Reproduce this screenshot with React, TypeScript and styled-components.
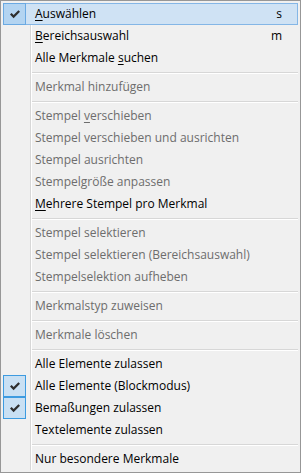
import React from "react";
import styled, { createGlobalStyle, css } from "styled-components";

type Entry =
  | { kind: "sep" }
  | {
      kind: "item";
      label: string;
      mnemonic?: number; // index of underlined letter
      shortcut?: string;
      disabled?: boolean;
      checked?: boolean;
      hot?: boolean;
    };

const entries: Entry[] = [
  { kind: "item", label: "Auswählen", mnemonic: 0, shortcut: "s", checked: true, hot: true },
  { kind: "item", label: "Bereichsauswahl", mnemonic: 0, shortcut: "m" },
  { kind: "item", label: "Alle Merkmale suchen", mnemonic: 14 },
  { kind: "sep" },
  { kind: "item", label: "Merkmal hinzufügen", disabled: true },
  { kind: "sep" },
  { kind: "item", label: "Stempel verschieben", mnemonic: 8, disabled: true },
  { kind: "item", label: "Stempel verschieben und ausrichten", disabled: true },
  { kind: "item", label: "Stempel ausrichten", disabled: true },
  { kind: "item", label: "Stempelgröße anpassen", disabled: true },
  { kind: "item", label: "Mehrere Stempel pro Merkmal", mnemonic: 0 },
  { kind: "sep" },
  { kind: "item", label: "Stempel selektieren", disabled: true },
  { kind: "item", label: "Stempel selektieren (Bereichsauswahl)", disabled: true },
  { kind: "item", label: "Stempelselektion aufheben", disabled: true },
  { kind: "sep" },
  { kind: "item", label: "Merkmalstyp zuweisen", disabled: true },
  { kind: "sep" },
  { kind: "item", label: "Merkmale löschen", disabled: true },
  { kind: "sep" },
  { kind: "item", label: "Alle Elemente zulassen" },
  { kind: "item", label: "Alle Elemente (Blockmodus)", checked: true },
  { kind: "item", label: "Bemaßungen zulassen", checked: true },
  { kind: "item", label: "Textelemente zulassen" },
  { kind: "sep" },
  { kind: "item", label: "Nur besondere Merkmale" },
];

const GlobalStyle = createGlobalStyle`
  html, body {
    margin: 0;
    padding: 0;
    background: #f0f0f0;
  }
`;

const Menu = styled.div`
  box-sizing: border-box;
  width: 301px;
  height: 473px;
  border: 1px solid #979797;
  padding: 2px;
  background: #f0f0f0;
  font-family: "Segoe UI", "Open Sans", "Noto Sans", sans-serif;
  font-size: 12px;
  color: #000;
  position: relative;
`;

// the gutter line between the check column and the labels
const Gutter = styled.div`
  position: absolute;
  top: 2px;
  bottom: 2px;
  left: 29px;
  width: 1px;
  background: #d7d7d7;
  box-shadow: 1px 0 0 #ffffff;
`;

const Row = styled.div<{ $hot?: boolean; $disabled?: boolean }>`
  position: relative;
  box-sizing: border-box;
  height: 22px;
  display: flex;
  align-items: center;
  border: 1px solid transparent;
  color: ${({ $disabled }) => ($disabled ? "#6d6d6d" : "#000")};
  ${({ $hot }) =>
    $hot &&
    css`
      background: #cfe2f4;
      border-color: #84b6e6;
    `}
`;

const CheckCell = styled.div<{ $on?: boolean; $hot?: boolean }>`
  box-sizing: border-box;
  width: 23px;
  height: 22px;
  margin: -1px 0 -1px -1px;
  display: flex;
  align-items: center;
  justify-content: center;
  border: 1px solid transparent;
  ${({ $on, $hot }) =>
    $on &&
    css`
      background: ${$hot ? "#b3d4f1" : "#c9e0f3"};
      border-color: ${$hot ? "#6aa9e2" : "#3d9be0"};
    `}
`;

const Label = styled.span`
  flex: 1;
  margin-left: 9px;
  white-space: nowrap;
  line-height: 16px;
`;

const Shortcut = styled.span`
  margin-right: 15px;
  line-height: 16px;
`;

const Mn = styled.span`
  text-decoration: underline;
  text-underline-offset: 2px;
`;

const Separator = styled.div`
  height: 7px;
  display: flex;
  align-items: center;
  padding-left: 28px;

  &::after {
    content: "";
    flex: 1;
    height: 1px;
    background: #d7d7d7;
    box-shadow: 0 1px 0 #ffffff;
  }
`;

const Check = () => (
  <svg width="10" height="9" viewBox="0 0 10 9">
    <path d="M0 4.6 L1.6 3 L3.6 5 L8.4 0.2 L10 1.8 L3.6 8.2 Z" fill="#2e2e2e" />
  </svg>
);

const renderLabel = (text: string, mn?: number) =>
  mn === undefined ? (
    text
  ) : (
    <>
      {text.slice(0, mn)}
      <Mn>{text[mn]}</Mn>
      {text.slice(mn + 1)}
    </>
  );

export default function App() {
  return (
    <>
      <GlobalStyle />
      <Menu>
        <Gutter />
        {entries.map((e, i) =>
          e.kind === "sep" ? (
            <Separator key={i} />
          ) : (
            <Row key={i} $hot={e.hot} $disabled={e.disabled}>
              <CheckCell $on={e.checked} $hot={e.hot}>
                {e.checked && <Check />}
              </CheckCell>
              <Label>{renderLabel(e.label, e.mnemonic)}</Label>
              {e.shortcut && <Shortcut>{e.shortcut}</Shortcut>}
            </Row>
          )
        )}
      </Menu>
    </>
  );
}
